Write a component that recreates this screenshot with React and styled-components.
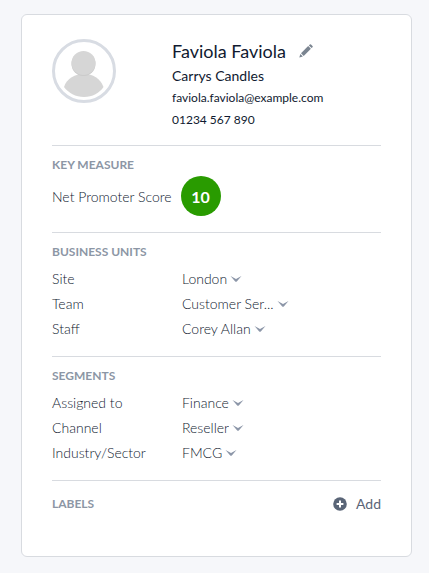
import React from 'react';
import styled, { createGlobalStyle } from 'styled-components';

const GlobalStyle = createGlobalStyle`
    * {
        box-sizing: border-box;
    }
    body {
        margin: 0;
        background-color: #f6f7fa;
        color: #101a30;
        font-family: Lato, "Open Sans", sans-serif;
    }
`;

const Page = styled.main`
    min-height: 100vh;
    padding: 14px 17px 16px 21px;
`;

const Card = styled.article`
    padding: 24px 30px 37px;
    background-color: white;
    border: 1px solid #d8dbe0;
    border-radius: 6px;
`;

const Header = styled.header`
    display: flex;
    gap: 56px;
    padding-bottom: 14px;
`;

const Avatar = styled.svg`
    flex: none;
    width: 64px;
    height: 64px;
`;

const Contact = styled.div`
    min-width: 0;
`;

const NameRow = styled.div`
    display: flex;
    align-items: center;
    gap: 13px;
    margin-bottom: 2px;
`;

const Name = styled.h1`
    margin: 0;
    font-size: 18px;
    font-weight: 400;
    line-height: 24px;
`;

const IconButton = styled.button`
    display: flex;
    padding: 0;
    border: none;
    background: none;
    cursor: pointer;
`;

const Company = styled.div`
    font-size: 14px;
    line-height: 22px;
`;

const ContactLink = styled.a`
    display: block;
    color: inherit;
    font-size: 12px;
    line-height: 22px;
    text-decoration: none;
`;

const Section = styled.section`
    padding: 10px 0 ${props => props.$bottom || "15px"};
    border-top: 1px solid #d8dbe0;
`;

const SectionTitle = styled.h2`
    margin: 0;
    color: #8c96a5;
    font-size: 12px;
    font-weight: 700;
    line-height: 18px;
    text-transform: uppercase;
`;

const Measure = styled.div`
    display: flex;
    align-items: center;
    gap: 9px;
    margin-top: 2px;
    font-size: 14px;
    font-weight: 300;
`;

const Score = styled.output`
    display: flex;
    align-items: center;
    justify-content: center;
    width: 40px;
    height: 40px;
    border-radius: 50%;
    background-color: #299b00;
    color: white;
    font-size: 16px;
    font-weight: 700;
`;

const Fields = styled.div`
    margin-top: 5px;
`;

const Field = styled.div`
    display: grid;
    grid-template-columns: 130px 1fr;
    align-items: center;
    height: 25px;
    font-size: 14px;
    font-weight: 300;
`;

const SelectWrap = styled.div`
    display: flex;
    align-items: center;
`;

const Select = styled.select`
    appearance: none;
    field-sizing: content;
    margin-right: -17px;
    padding: 0 20px 0 0;
    border: none;
    background: none;
    color: inherit;
    font: inherit;
    line-height: 24px;
    cursor: pointer;
`;

const Chevron = styled.svg`
    flex: none;
    width: 12px;
    height: 6px;
    pointer-events: none;
`;

const LabelsRow = styled.div`
    display: flex;
    align-items: center;
    justify-content: space-between;
    padding-top: 4px;
`;

const AddButton = styled.button`
    display: flex;
    align-items: center;
    gap: 9px;
    padding: 0;
    border: none;
    background: none;
    color: #5a6577;
    font-family: inherit;
    font-size: 14px;
    line-height: 18px;
    cursor: pointer;
`;

const businessUnits = [
  { id: 'site', label: 'Site', value: 'London' },
  { id: 'team', label: 'Team', value: 'Customer Ser...' },
  { id: 'staff', label: 'Staff', value: 'Corey Allan' },
];

const segments = [
  { id: 'assigned', label: 'Assigned to', value: 'Finance' },
  { id: 'channel', label: 'Channel', value: 'Reseller' },
  { id: 'industry', label: 'Industry/Sector', value: 'FMCG' },
];

const AvatarIcon = () => (
  <Avatar viewBox="0 0 64 64" role="img" aria-label="Faviola Faviola">
    <circle cx="32" cy="32" r="30.5" fill="#fff" stroke="#d8dce3" strokeWidth="3" />
    <path d="M12 48C15 39 23 35 32 35s16 4 19.500 13c-4 6-11 10-19.500 10s-15.500-4-20-10z" fill="#d6d6d6" />
    <circle cx="31.5" cy="25" r="12" fill="#cacaca" />
    <circle cx="31.5" cy="24" r="12" fill="#d6d6d6" />
  </Avatar>
);

const PencilIcon = () => (
  <svg width="14" height="14" viewBox="0 0 14 14" fill="#7a8490" aria-hidden="true">
    <path d="M0.3 13.5l1.1-3.6 2.5 2.5z" />
    <path d="M2 9.2L9.2 2l2.7 2.7-7.2 7.2z" />
    <path d="M9.9 1.4l0.9-0.9q0.6-0.6 1.2 0l1.5 1.5q0.6 0.6 0 1.2l-0.9 0.9z" />
  </svg>
);

const AddIcon = () => (
  <svg width="14" height="14" viewBox="0 0 14 14" aria-hidden="true">
    <circle cx="7" cy="7" r="6.8" fill="#5a6577" />
    <path d="M7 3.6v6.8M3.6 7h6.8" stroke="#fff" strokeWidth="2" />
  </svg>
);

const FieldList = ({ fields }) => (
  <Fields>
    {fields.map(({ id, label, value }) => (
      <Field key={id}>
        <label htmlFor={id}>{label}</label>
        <SelectWrap>
          <Select id={id} defaultValue={value}>
            <option>{value}</option>
          </Select>
          <Chevron viewBox="0 0 12 6" aria-hidden="true">
            <path d="M0.500 0L6 3L11.500 0L6.800 5.400Q6 6.200 5.200 5.400z" fill="#8c96a8" />
          </Chevron>
        </SelectWrap>
      </Field>
    ))}
  </Fields>
);

const App = () => {
  return (
    <>
      <GlobalStyle />
      <Page>
        <Card>
          <Header>
            <AvatarIcon />
            <Contact>
              <NameRow>
                <Name>Faviola Faviola</Name>
                <IconButton type="button" aria-label="Edit contact">
                  <PencilIcon />
                </IconButton>
              </NameRow>
              <Company>Carrys Candles</Company>
              <ContactLink href="mailto:faviola.faviola@example.com">faviola.faviola@example.com</ContactLink>
              <ContactLink href="tel:01234567890">01234 567 890</ContactLink>
            </Contact>
          </Header>
          <Section $bottom="16px">
            <SectionTitle>Key measure</SectionTitle>
            <Measure>
              <span>Net Promoter Score</span>
              <Score>10</Score>
            </Measure>
          </Section>
          <Section>
            <SectionTitle>Business units</SectionTitle>
            <FieldList fields={businessUnits} />
          </Section>
          <Section>
            <SectionTitle>Segments</SectionTitle>
            <FieldList fields={segments} />
          </Section>
          <Section $bottom="6px">
            <LabelsRow>
              <SectionTitle>Labels</SectionTitle>
              <AddButton type="button">
                <AddIcon />
                Add
              </AddButton>
            </LabelsRow>
          </Section>
        </Card>
      </Page>
    </>
  )
}

export default App
